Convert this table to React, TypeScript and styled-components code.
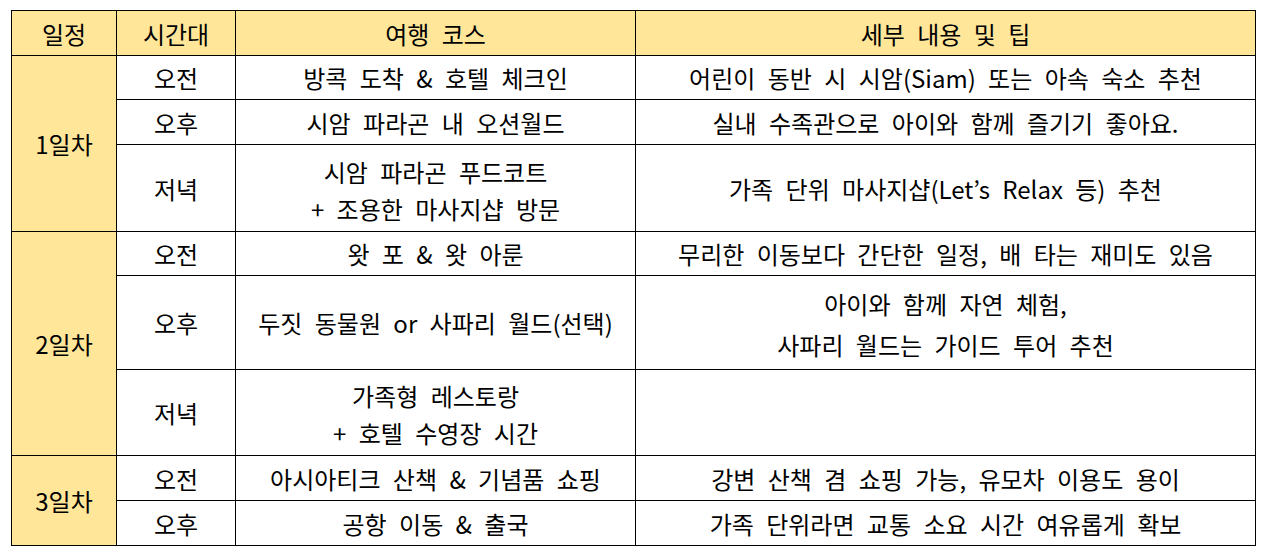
import React from 'react';
import styled, { createGlobalStyle } from 'styled-components';

const GlobalStyle = createGlobalStyle`
  html, body {
    margin: 0;
    padding: 0;
    background: #ffffff;
  }
  body {
    font-family: "Noto Sans CJK KR", "Noto Sans", sans-serif;
    color: #000000;
  }
`;

const Page = styled.div`
  padding: 10px 0 0 11px;
`;

const Table = styled.table`
  border-collapse: collapse;
  table-layout: fixed;
  width: 1240px;
  font-size: 24px;
  line-height: 37px;
  text-align: center;
  word-spacing: 7px;
`;

const HeadCell = styled.th<{ $w: number }>`
  width: ${(p) => p.$w}px;
  height: 44px;
  padding: 0;
  background: #ffe699;
  border: 1.5px solid #000;
  font-weight: 400;
`;

const DayCell = styled.td`
  background: #ffe699;
  border: 1.5px solid #000;
  padding: 0;
`;

const Cell = styled.td`
  border: 1.5px solid #000;
  padding: 0;
`;

const Row = styled.tr<{ $h: number }>`
  height: ${(p) => p.$h}px;
`;

const Lines = styled.div<{ $lh?: number; $multi: boolean }>`
  line-height: ${(p) => (p.$lh ? `${p.$lh}px` : 'inherit')};
  padding-top: ${(p) => (p.$multi ? '3px' : '0')};
`;

type Slot = { time: string; course: string[]; tip: string[]; h: number; lh?: number };
type Day = { label: string; slots: Slot[] };

const days: Day[] = [
  {
    label: '1일차',
    slots: [
      { time: '오전', course: ['방콕 도착 & 호텔 체크인'], tip: ['어린이 동반 시 시암(Siam) 또는 아속 숙소 추천'], h: 44 },
      { time: '오후', course: ['시암 파라곤 내 오션월드'], tip: ['실내 수족관으로 아이와 함께 즐기기 좋아요.'], h: 45 },
      { time: '저녁', course: ['시암 파라곤 푸드코트', '+ 조용한 마사지샵 방문'], tip: ['가족 단위 마사지샵(Let’s Relax 등) 추천'], h: 87 },
    ],
  },
  {
    label: '2일차',
    slots: [
      { time: '오전', course: ['왓 포 & 왓 아룬'], tip: ['무리한 이동보다 간단한 일정, 배 타는 재미도 있음'], h: 44 },
      { time: '오후', course: ['두짓 동물원 or 사파리 월드(선택)'], tip: ['아이와 함께 자연 체험,', '사파리 월드는 가이드 투어 추천'], h: 94, lh: 41 },
      { time: '저녁', course: ['가족형 레스토랑', '+ 호텔 수영장 시간'], tip: [], h: 86 },
    ],
  },
  {
    label: '3일차',
    slots: [
      { time: '오전', course: ['아시아티크 산책 & 기념품 쇼핑'], tip: ['강변 산책 겸 쇼핑 가능, 유모차 이용도 용이'], h: 45 },
      { time: '오후', course: ['공항 이동 & 출국'], tip: ['가족 단위라면 교통 소요 시간 여유롭게 확보'], h: 45 },
    ],
  },
];

const Text = ({ lines, lh }: { lines: string[]; lh?: number }) => (
  <Lines $lh={lh} $multi={lines.length > 1}>
    {lines.map((l, i) => (
      <div key={i}>{l}</div>
    ))}
  </Lines>
);

export default function App() {
  return (
    <Page>
      <GlobalStyle />
      <Table>
        <thead>
          <tr>
            <HeadCell $w={104}>일정</HeadCell>
            <HeadCell $w={118}>시간대</HeadCell>
            <HeadCell $w={399}>여행 코스</HeadCell>
            <HeadCell $w={619}>세부 내용 및 팁</HeadCell>
          </tr>
        </thead>
        <tbody>
          {days.map((d) =>
            d.slots.map((s, i) => (
              <Row key={d.label + s.time} $h={s.h}>
                {i === 0 && <DayCell rowSpan={d.slots.length}>{d.label}</DayCell>}
                <Cell>{s.time}</Cell>
                <Cell>
                  <Text lines={s.course} lh={s.lh} />
                </Cell>
                <Cell>
                  <Text lines={s.tip} lh={s.lh} />
                </Cell>
              </Row>
            ))
          )}
        </tbody>
      </Table>
    </Page>
  );
}
